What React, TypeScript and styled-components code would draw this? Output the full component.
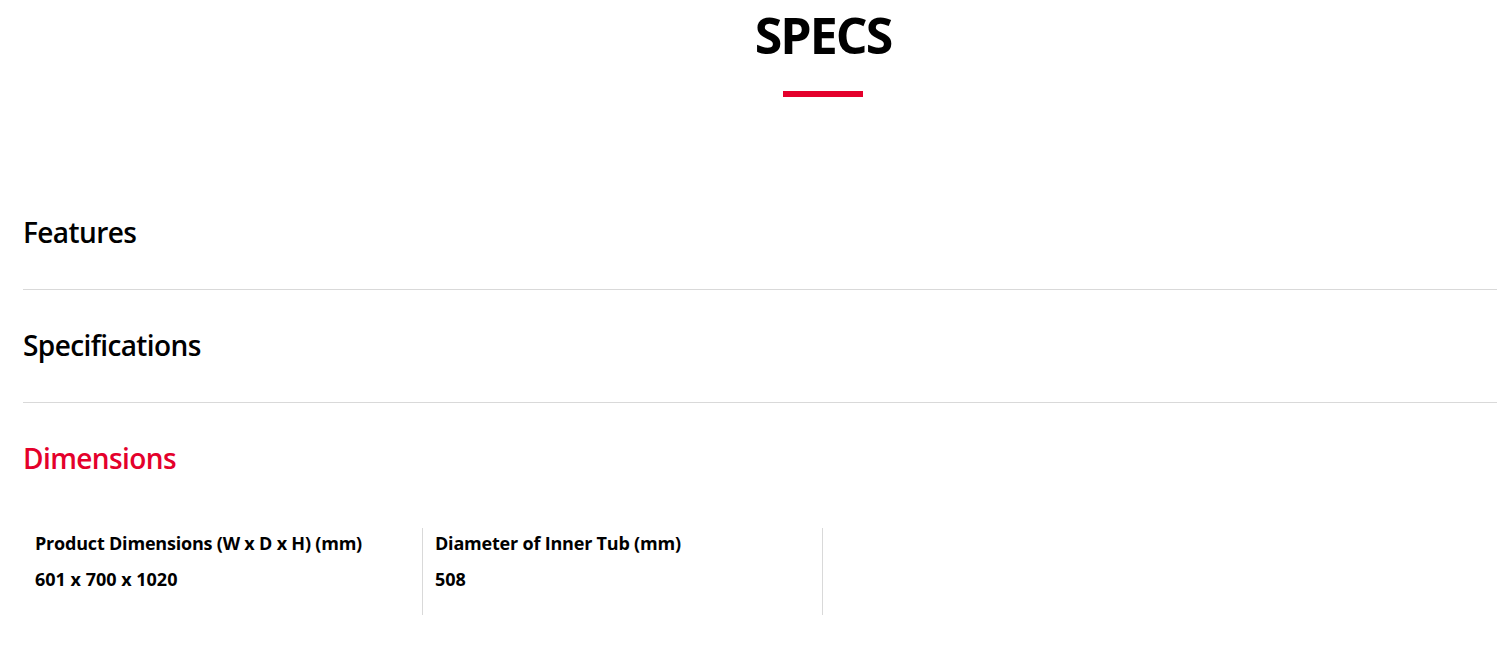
import React from "react";
import styled, { createGlobalStyle } from "styled-components";

const GlobalStyle = createGlobalStyle`
  html, body {
    margin: 0;
    padding: 0;
    background: #ffffff;
    overflow: hidden;
  }
  body {
    font-family: "Open Sans", "Noto Sans", sans-serif;
    color: #000000;
  }
`;

const Page = styled.div`
  width: 1600px;
  margin-left: 23px;
`;

const TitleBlock = styled.header`
  display: flex;
  flex-direction: column;
  align-items: center;
  padding-top: 6px;
  padding-bottom: 80px;
`;

const Title = styled.h2`
  margin: 0;
  font-size: 50px;
  line-height: 59px;
  font-weight: 700;
  letter-spacing: -2px;
`;

const RedBar = styled.span`
  display: block;
  width: 80px;
  height: 6px;
  margin-top: 26px;
  background: #e4002b;
`;

const Accordion = styled.section`
  display: flex;
  flex-direction: column;
`;

const Item = styled.div<{ $last?: boolean }>`
  border-bottom: ${(p) => (p.$last ? "none" : "1px solid #d9d9d9")};
`;

const ItemHeader = styled.h3<{ $open?: boolean }>`
  margin: 0;
  padding: 35px 0 ${(p) => (p.$open ? "0" : "37px")};
  font-size: 28px;
  line-height: 40px;
  font-weight: 600;
  letter-spacing: -0.6px;
  color: ${(p) => (p.$open ? "#e4002b" : "#000000")};
`;

const SpecGrid = styled.div`
  display: grid;
  grid-template-columns: repeat(4, 400px);
  margin-top: 50px;
`;

const SpecCell = styled.div`
  padding: 2px 12px 23px;
  border-right: 1px solid #d9d9d9;
`;

const SpecLabel = styled.div`
  font-size: 18px;
  line-height: 26px;
  font-weight: 700;
  letter-spacing: -0.2px;
`;

const SpecValue = styled(SpecLabel)`
  margin-top: 10px;
  letter-spacing: 0;
`;

const specs = [
  { label: "Product Dimensions (W x D x H) (mm)", value: "601 x 700 x 1020" },
  { label: "Diameter of Inner Tub (mm)", value: "508" },
];

export default function App() {
  return (
    <>
      <GlobalStyle />
      <Page>
        <TitleBlock>
          <Title>SPECS</Title>
          <RedBar />
        </TitleBlock>
        <Accordion>
          <Item>
            <ItemHeader>Features</ItemHeader>
          </Item>
          <Item>
            <ItemHeader>Specifications</ItemHeader>
          </Item>
          <Item $last>
            <ItemHeader $open>Dimensions</ItemHeader>
            <SpecGrid>
              {specs.map((s) => (
                <SpecCell key={s.label}>
                  <SpecLabel>{s.label}</SpecLabel>
                  <SpecValue>{s.value}</SpecValue>
                </SpecCell>
              ))}
            </SpecGrid>
          </Item>
        </Accordion>
      </Page>
    </>
  );
}
